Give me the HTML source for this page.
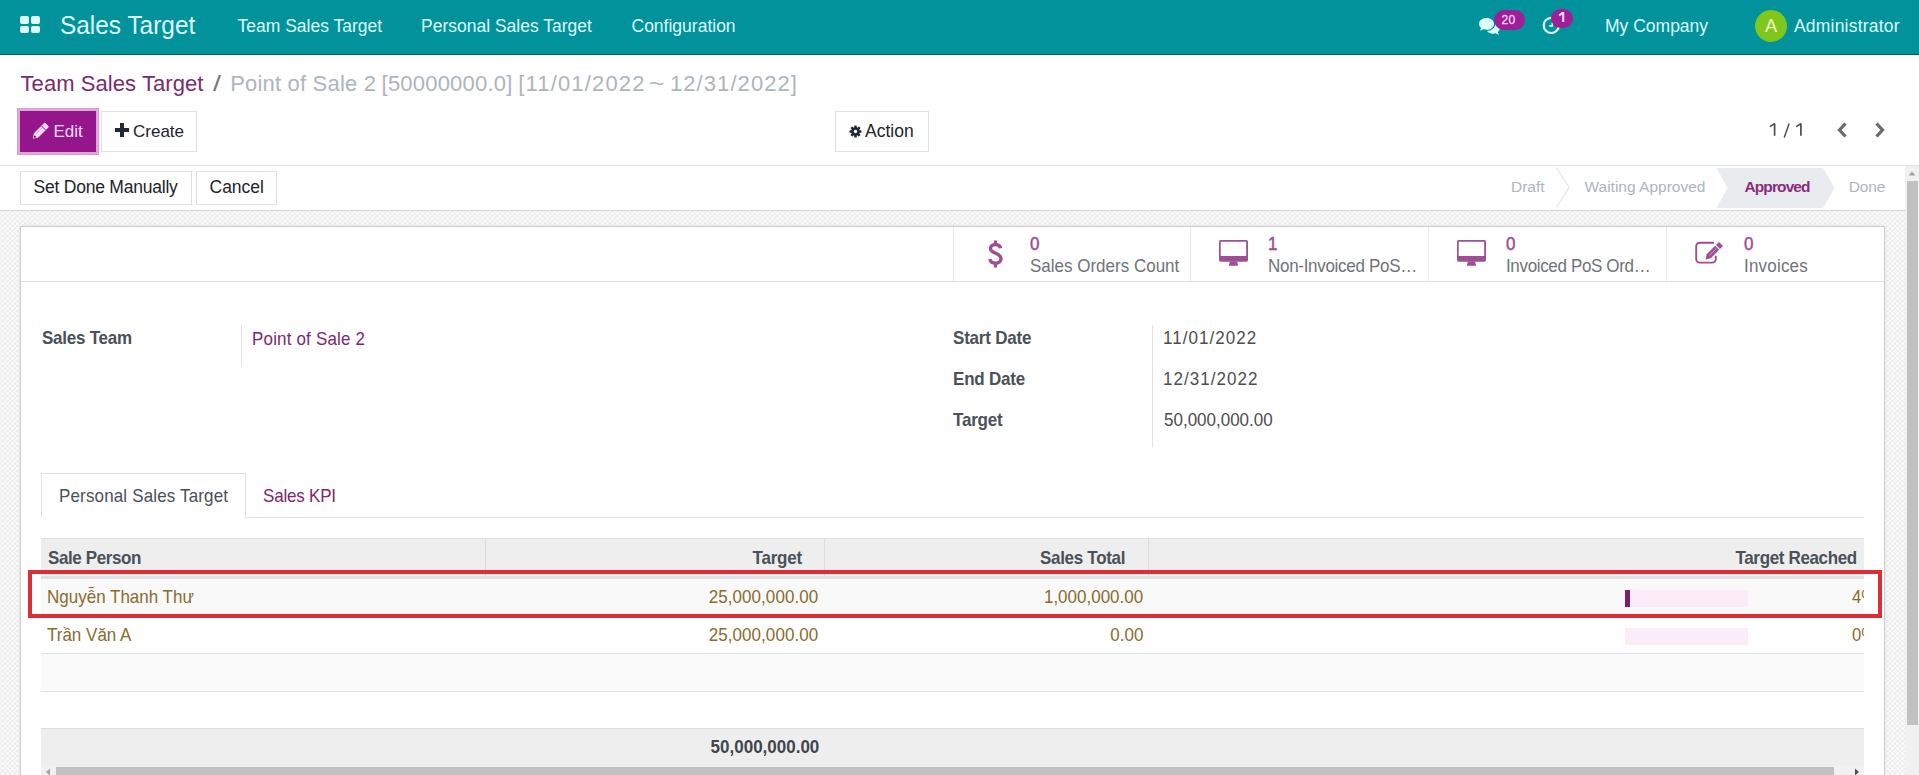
<!DOCTYPE html>
<html><head><meta charset="utf-8"><title>Sales Target</title>
<style>
html,body{margin:0;padding:0;}
body{width:1919px;height:775px;position:relative;overflow:hidden;background:#fff;font-family:"Liberation Sans",sans-serif;}
.r{position:absolute;}
.t{position:absolute;white-space:nowrap;line-height:1;}
.bgpat{background-color:#ebebeb;background-image:
 radial-gradient(circle at 50% 50%,#fbfbfb 0,#fbfbfb 0.9px,rgba(251,251,251,0) 2px),
 radial-gradient(circle at 50% 50%,#fbfbfb 0,#fbfbfb 0.9px,rgba(251,251,251,0) 2px);
 background-size:5px 5px;background-position:0 0,2.5px 2.5px;}
</style></head><body>
<div class="r" style="left:0px;top:0px;width:1919px;height:54px;background:#01929b;"></div>
<div class="r" style="left:0px;top:54px;width:1919px;height:1px;background:#0d5a60;"></div>
<div class="r" style="left:20px;top:16px;width:9.4px;height:8.4px;background:#dcfdfd;border-radius:2px;"></div>
<div class="r" style="left:30.8px;top:16px;width:9.4px;height:8.4px;background:#dcfdfd;border-radius:2px;"></div>
<div class="r" style="left:20px;top:25.8px;width:9.4px;height:7.4px;background:#dcfdfd;border-radius:2px;"></div>
<div class="r" style="left:30.8px;top:25.8px;width:9.4px;height:7.4px;background:#dcfdfd;border-radius:2px;"></div>
<div class="t" style="left:60px;top:11.58px;font-size:26.60px;color:#dcfdfd;transform:scaleX(0.918);transform-origin:0 0;">Sales Target</div>
<div class="t" style="left:237.5px;top:17.99px;font-size:17.50px;color:#dcfdfd;">Team Sales Target</div>
<div class="t" style="left:421px;top:17.99px;font-size:17.50px;color:#dcfdfd;">Personal Sales Target</div>
<div class="t" style="left:631.5px;top:17.99px;font-size:17.50px;color:#dcfdfd;">Configuration</div>
<div class="t" style="left:1605px;top:17.99px;font-size:17.50px;color:#dcfdfd;">My Company</div>
<div class="t" style="left:1794px;top:17.99px;font-size:17.50px;color:#dcfdfd;letter-spacing:0.200px;">Administrator</div>
<svg class="r" style="left:1478px;top:17px" width="24" height="20" viewBox="0 0 24 20">
<path fill="#dcfdfd" d="M8.5 1C4.2 1 1 3.6 1 6.8c0 1.7.9 3.2 2.3 4.3L1.8 13.8l3.6-1.5c1 .3 2 .5 3.1.5 4.2 0 7.5-2.6 7.5-5.9S12.7 1 8.5 1z"/>
<path fill="#dcfdfd" d="M17.2 7.2c0 3.9-3.9 6.6-8.2 6.8 1.2 1.6 3.4 2.7 5.9 2.7.9 0 1.8-.1 2.6-.4l3.6 1.6-1.4-2.8c1.3-1 2.1-2.4 2.1-3.9 0-1.6-1-3.1-2.5-4.1-.6 0-1.3 0-2.1.1z"/>
</svg>
<div class="r" style="left:1494px;top:10px;width:30.5px;height:19.5px;background:#9e1f98;border-radius:10px;"></div>
<div class="t" style="left:1501.5px;top:13.84px;font-size:12.00px;color:#fbdaf6;letter-spacing:0.400px;-webkit-text-stroke:0.3px #fbdaf6;">20</div>
<svg class="r" style="left:1542px;top:15px" width="20" height="20" viewBox="0 0 20 20">
<circle cx="9.3" cy="10.4" r="7.6" fill="none" stroke="#dcfdfd" stroke-width="2.2"/>
<path d="M10.3 7.4V10.9H7.3" fill="none" stroke="#dcfdfd" stroke-width="1.6"/>
</svg>
<div class="r" style="left:1551px;top:9px;width:22px;height:19px;background:#9e1f98;border-radius:10px;"></div>
<svg class="r" style="left:1551px;top:9px" width="22" height="19" viewBox="0 0 22 19"><path d="M8.2 6.4L11.3 4.1H12.2V12.9" fill="none" stroke="#fbdaf6" stroke-width="2.1" stroke-linejoin="miter"/></svg>
<div class="r" style="left:1755px;top:10px;width:32px;height:32px;background:#80c71c;border-radius:50%;"></div>
<div class="t" style="left:1771px;top:17.10px;font-size:18.19px;color:#f4f8c6;transform:scaleX(0.9346);transform-origin:0 0;transform:translateX(-50%);">A</div>
<div class="t" style="left:20.5px;top:72.98px;font-size:22.00px;color:#7a2b70;letter-spacing:0.070px;">Team Sales Target</div>
<div class="t" style="left:213px;top:72.98px;font-size:22.00px;color:#76787c;transform:scaleX(1.3);transform-origin:0 0;">/</div>
<div class="t" style="left:230.2px;top:72.98px;font-size:22.00px;color:#adb5bd;letter-spacing:0.190px;">Point of Sale 2</div>
<div class="t" style="left:381.6px;top:72.98px;font-size:22.00px;color:#adb5bd;letter-spacing:0.200px;">[50000000.0]</div>
<div class="t" style="left:518.2px;top:72.98px;font-size:22.00px;color:#adb5bd;letter-spacing:1.170px;">[11/01/2022</div>
<div class="t" style="left:649.2px;top:72.98px;font-size:22.00px;color:#adb5bd;transform:scaleX(1.2);transform-origin:0 0;">~</div>
<div class="t" style="left:670.0px;top:72.98px;font-size:22.00px;color:#adb5bd;letter-spacing:1.070px;">12/31/2022]</div>
<div class="r" style="left:17px;top:108px;width:82px;height:47px;background:#e3a4d9;box-shadow:inset 0 0 0 1px #cfa6ca;"></div>
<div class="r" style="left:20px;top:111px;width:76px;height:41px;background:#95168c;"></div>
<svg class="r" style="left:26px;top:116px" width="30" height="30" viewBox="0 0 30 30">
<g transform="translate(7.2 22.3) rotate(-45)">
<path d="M0 0L4.3-2.8H18.4a0.8 0.8 0 0 1 .8.8V2a0.8 0.8 0 0 1-.8.8H4.3z" fill="#fbdcf6" stroke="#fbdcf6" stroke-width="0.6" stroke-linejoin="round"/>
<path d="M14.6-2.9V2.9" stroke="#74106c" stroke-width="0.9"/>
<path d="M5.5-1.2H13" stroke="#b86ab2" stroke-width="0.6"/>
<circle cx="2.3" cy="0" r="1" fill="#3d0c3a"/>
</g></svg>
<div class="t" style="left:53.5px;top:122.61px;font-size:17.00px;color:#fbdcf6;">Edit</div>
<div class="r" style="left:101px;top:111px;width:96px;height:41px;border:1px solid #dee2e6;box-sizing:border-box;background:#fff;"></div>
<div class="r" style="left:114.5px;top:128px;width:14px;height:4px;background:#1f2a33;"></div>
<div class="r" style="left:119.5px;top:123px;width:4px;height:14px;background:#1f2a33;"></div>
<div class="t" style="left:133px;top:122.61px;font-size:17.00px;color:#212529;">Create</div>
<div class="r" style="left:835px;top:111px;width:94px;height:41px;border:1px solid #dee2e6;box-sizing:border-box;background:#fff;"></div>
<svg class="r" style="left:848.5px;top:124.5px" width="13" height="13" viewBox="0 0 14 14">
<g fill="#1f2a33"><circle cx="7" cy="7" r="4.6"/>
<rect x="5.6" y="0.6" width="2.8" height="12.8" rx="0.6"/>
<rect x="5.6" y="0.6" width="2.8" height="12.8" rx="0.6" transform="rotate(45 7 7)"/>
<rect x="5.6" y="0.6" width="2.8" height="12.8" rx="0.6" transform="rotate(90 7 7)"/>
<rect x="5.6" y="0.6" width="2.8" height="12.8" rx="0.6" transform="rotate(135 7 7)"/></g>
<circle cx="7" cy="7" r="1.8" fill="#fff"/>
</svg>
<div class="t" style="left:865px;top:122.59px;font-size:17.50px;color:#212529;">Action</div>
<svg class="r" style="left:1765px;top:118px" width="45" height="25" viewBox="0 0 45 25">
<path d="M4.9 8.6L9.6 5.6V17.8" fill="none" stroke="#4a4e53" stroke-width="1.7" stroke-linejoin="bevel"/>
<path d="M19.2 19.4L24.2 5.4" fill="none" stroke="#4a4e53" stroke-width="1.45"/>
<path d="M31.2 8.6L35.9 5.6V17.8" fill="none" stroke="#4a4e53" stroke-width="1.7" stroke-linejoin="bevel"/>
</svg>
<svg class="r" style="left:1836px;top:121px" width="52" height="18" viewBox="0 0 52 18">
<path d="M9.5 2.5L3.5 9l6 6.5" fill="none" stroke="#6b6b6b" stroke-width="3.3"/>
<path d="M40.5 2.5L46.5 9l-6 6.5" fill="none" stroke="#6b6b6b" stroke-width="3.3"/>
</svg>
<div class="r" style="left:0px;top:165px;width:1919px;height:1px;background:#dee2e6;"></div>
<div class="r" style="left:0px;top:166px;width:1905px;height:44px;background:#fff;"></div>
<div class="r" style="left:0px;top:210px;width:1905px;height:1px;background:#d3d3d3;"></div>
<div class="r" style="left:20px;top:171px;width:172px;height:34px;border:1px solid #dee2e6;box-sizing:border-box;"></div>
<div class="t" style="left:33.5px;top:178.99px;font-size:17.50px;color:#212529;letter-spacing:-0.220px;">Set Done Manually</div>
<div class="r" style="left:196px;top:171px;width:81px;height:34px;border:1px solid #dee2e6;box-sizing:border-box;"></div>
<div class="t" style="left:209.5px;top:178.99px;font-size:17.50px;color:#212529;">Cancel</div>
<div class="t" style="left:1511px;top:179.38px;font-size:15.50px;color:#adb5bd;">Draft</div>
<svg class="r" style="left:1555px;top:166px" width="18" height="44" viewBox="0 0 18 44">
<path d="M1.5 1.5L14 21.5 1.5 41.5" fill="none" stroke="#e3e6ea" stroke-width="1.2"/></svg>
<div class="t" style="left:1584.5px;top:179.38px;font-size:15.50px;color:#adb5bd;">Waiting Approved</div>
<svg class="r" style="left:1716px;top:168px" width="120" height="40" viewBox="0 0 120 40">
<path d="M0.5 0H107L118.5 20 107 40H0.5L11.5 20z" fill="#e9ecef"/></svg>
<div class="t" style="left:1744.5px;top:179.38px;font-size:15.50px;color:#8b2b80;font-weight:700;letter-spacing:-0.900px;">Approved</div>
<div class="t" style="left:1848.7px;top:179.38px;font-size:15.50px;color:#adb5bd;letter-spacing:-0.100px;">Done</div>
<div class="r bgpat" style="left:0;top:211px;width:1905px;height:564px;"></div>
<div class="r" style="left:1905px;top:166px;width:14px;height:609px;background:#f1f1f1;"></div>
<svg class="r" style="left:1905px;top:166px" width="14" height="14" viewBox="0 0 14 14"><path d="M3.5 9.5L7 5.5 10.5 9.5z" fill="#a3a3a3"/></svg>
<div class="r" style="left:1907px;top:181px;width:11px;height:544px;background:#c1c1c1;"></div>
<div class="r" style="left:20px;top:226px;width:1865px;height:549px;background:#fff;border:1px solid #cdcdcd;border-bottom:none;box-sizing:border-box;box-shadow:0 0 4px rgba(0,0,0,0.07);"></div>
<div class="r" style="left:21px;top:281px;width:1863px;height:1px;background:#dee2e6;"></div>
<div class="r" style="left:953px;top:227px;width:1px;height:54px;background:#e9ecef;"></div>
<div class="r" style="left:1190px;top:227px;width:1px;height:54px;background:#e9ecef;"></div>
<div class="r" style="left:1428px;top:227px;width:1px;height:54px;background:#e9ecef;"></div>
<div class="r" style="left:1666px;top:227px;width:1px;height:54px;background:#e9ecef;"></div>
<svg class="r" style="left:987px;top:239px" width="17" height="30" viewBox="0 0 17 30">
<path d="M13.6 9.2C13.2 7 11.2 5.6 8.5 5.6 5.6 5.6 3.5 7.2 3.5 9.6c0 5.6 10.5 3.6 10.5 10.2 0 2.6-2.3 4.4-5.5 4.4-3 0-5.2-1.6-5.6-4.1" fill="none" stroke="#9f4e96" stroke-width="3.4"/>
<rect x="6.9" y="1.5" width="3.2" height="5" fill="#9f4e96"/><rect x="6.9" y="23" width="3.2" height="5.5" fill="#9f4e96"/>
</svg>
<div class="t" style="left:1030px;top:233.98px;font-size:19.04px;color:#9a4c91;transform:scaleX(0.8929);transform-origin:0 0;-webkit-text-stroke:0.5px #9a4c91;">0</div>
<div class="t" style="left:1030px;top:256.60px;font-size:18.19px;color:#6f7378;transform:scaleX(0.9346);transform-origin:0 0;">Sales Orders Count</div>
<svg class="r" style="left:1210px;top:232px" width="50" height="40" viewBox="0 0 50 40">
<path fill="#9f4e96" fill-rule="evenodd" d="M10.8 8h25.4A1.8 1.8 0 0 1 38 9.8v18.1a1.8 1.8 0 0 1-1.8 1.8H10.8A1.8 1.8 0 0 1 9 27.9V9.8A1.8 1.8 0 0 1 10.8 8zM10.7 9.8V24h25.5V9.8z"/>
<path fill="#9f4e96" d="M19.9 29.5h7.2l1 4.3h-9.3z"/></svg>
<div class="t" style="left:1268px;top:233.98px;font-size:19.04px;color:#9a4c91;transform:scaleX(0.8929);transform-origin:0 0;-webkit-text-stroke:0.5px #9a4c91;">1</div>
<div class="t" style="left:1268px;top:256.60px;font-size:18.19px;color:#6f7378;letter-spacing:-0.321px;transform:scaleX(0.9346);transform-origin:0 0;">Non-Invoiced PoS…</div>
<svg class="r" style="left:1447.5px;top:232px" width="50" height="40" viewBox="0 0 50 40">
<path fill="#9f4e96" fill-rule="evenodd" d="M10.8 8h25.4A1.8 1.8 0 0 1 38 9.8v18.1a1.8 1.8 0 0 1-1.8 1.8H10.8A1.8 1.8 0 0 1 9 27.9V9.8A1.8 1.8 0 0 1 10.8 8zM10.7 9.8V24h25.5V9.8z"/>
<path fill="#9f4e96" d="M19.9 29.5h7.2l1 4.3h-9.3z"/></svg>
<div class="t" style="left:1505.5px;top:233.98px;font-size:19.04px;color:#9a4c91;transform:scaleX(0.8929);transform-origin:0 0;-webkit-text-stroke:0.5px #9a4c91;">0</div>
<div class="t" style="left:1505.5px;top:256.60px;font-size:18.19px;color:#6f7378;letter-spacing:-0.374px;transform:scaleX(0.9346);transform-origin:0 0;">Invoiced PoS Ord…</div>
<svg class="r" style="left:1685px;top:232px" width="50" height="40" viewBox="0 0 50 40">
<path d="M29 10.7H14.7a3.5 3.5 0 0 0-3.5 3.5v12.9a3.5 3.5 0 0 0 3.5 3.5h12.6a3.5 3.5 0 0 0 3.5-3.5v-3.4" fill="none" stroke="#9f4e96" stroke-width="1.9"/>
<path fill="#9f4e96" d="M20.5 27.5L25.66 26.3 34.15 17.81 30.19 13.85 21.7 22.34z"/>
<path fill="#9f4e96" d="M35 16.96L37.97 13.99 34.01 10.03 31.04 13z"/>
<path d="M24.6 23.2L31.4 16.4" stroke="#fff" stroke-width="0.8" opacity="0.6"/>
</svg>
<div class="t" style="left:1744px;top:233.98px;font-size:19.04px;color:#9a4c91;transform:scaleX(0.8929);transform-origin:0 0;-webkit-text-stroke:0.5px #9a4c91;">0</div>
<div class="t" style="left:1744px;top:256.60px;font-size:18.19px;color:#6f7378;letter-spacing:0.214px;transform:scaleX(0.9346);transform-origin:0 0;">Invoices</div>
<div class="t" style="left:41.5px;top:328.70px;font-size:18.19px;color:#4a5159;font-weight:700;letter-spacing:-0.268px;transform:scaleX(0.9346);transform-origin:0 0;">Sales Team</div>
<div class="r" style="left:241px;top:325px;width:1px;height:41px;background:#e3e3e3;"></div>
<div class="t" style="left:251.6px;top:329.90px;font-size:18.19px;color:#7b2871;letter-spacing:0.182px;transform:scaleX(0.9346);transform-origin:0 0;">Point of Sale 2</div>
<div class="t" style="left:952.5px;top:328.60px;font-size:18.19px;color:#4a5159;font-weight:700;letter-spacing:-0.214px;transform:scaleX(0.9346);transform-origin:0 0;">Start Date</div>
<div class="t" style="left:952.5px;top:369.90px;font-size:18.19px;color:#4a5159;font-weight:700;letter-spacing:-0.214px;transform:scaleX(0.9346);transform-origin:0 0;">End Date</div>
<div class="t" style="left:952.5px;top:410.80px;font-size:18.19px;color:#4a5159;font-weight:700;letter-spacing:-0.214px;transform:scaleX(0.9346);transform-origin:0 0;">Target</div>
<div class="r" style="left:1152px;top:325px;width:1px;height:122px;background:#e3e3e3;"></div>
<div class="t" style="left:1162.8px;top:329.10px;font-size:18.19px;color:#4d4d4d;letter-spacing:1.124px;transform:scaleX(0.9346);transform-origin:0 0;">11/01/2022</div>
<div class="t" style="left:1162.8px;top:370.10px;font-size:18.19px;color:#4d4d4d;letter-spacing:1.124px;transform:scaleX(0.9346);transform-origin:0 0;">12/31/2022</div>
<div class="t" style="left:1163.5px;top:411.10px;font-size:18.19px;color:#4d4d4d;transform:scaleX(0.9346);transform-origin:0 0;">50,000,000.00</div>
<div class="r" style="left:41px;top:517px;width:1823px;height:1px;background:#dee2e6;"></div>
<div class="r" style="left:41px;top:473px;width:205px;height:45px;background:#fff;border:1px solid #dee2e6;border-bottom-color:#fff;box-sizing:border-box;"></div>
<div class="t" style="left:59px;top:487.10px;font-size:18.19px;color:#4a5159;letter-spacing:0.161px;transform:scaleX(0.9346);transform-origin:0 0;">Personal Sales Target</div>
<div class="t" style="left:262.6px;top:487.10px;font-size:18.19px;color:#7b2871;letter-spacing:-0.214px;transform:scaleX(0.9346);transform-origin:0 0;">Sales KPI</div>
<div class="r" style="left:41px;top:538px;width:1823px;height:1px;background:#dee2e6;"></div>
<div class="r" style="left:41px;top:539px;width:1823px;height:37px;background:#eeeeee;"></div>
<div class="r" style="left:41px;top:576px;width:1823px;height:3px;background:#e0e1e3;"></div>
<div class="r" style="left:485px;top:539px;width:1px;height:37px;background:#dcdcdc;"></div>
<div class="r" style="left:824px;top:539px;width:1px;height:37px;background:#dcdcdc;"></div>
<div class="r" style="left:1148px;top:539px;width:1px;height:37px;background:#dcdcdc;"></div>
<div class="t" style="left:47.5px;top:548.60px;font-size:18.19px;color:#4a5159;font-weight:700;letter-spacing:-0.428px;transform:scaleX(0.9346);transform-origin:0 0;">Sale Person</div>
<div class="t" style="right:1117px;top:548.60px;font-size:18.19px;color:#4a5159;font-weight:700;letter-spacing:-0.214px;transform:scaleX(0.9346);transform-origin:100% 0;">Target</div>
<div class="t" style="right:793.5px;top:548.60px;font-size:18.19px;color:#4a5159;font-weight:700;letter-spacing:-0.321px;transform:scaleX(0.9346);transform-origin:100% 0;">Sales Total</div>
<div class="t" style="right:62px;top:548.60px;font-size:18.19px;color:#4a5159;font-weight:700;letter-spacing:-0.374px;transform:scaleX(0.9346);transform-origin:100% 0;">Target Reached</div>
<div class="r" style="left:41px;top:579px;width:1823px;height:36px;background:#f9f9f9;"></div>
<div class="r" style="left:41px;top:615px;width:1823px;height:1px;background:#e9ecef;"></div>
<div class="t" style="left:46.5px;top:588.40px;font-size:18.19px;color:#8a6c2d;transform:scaleX(0.9346);transform-origin:0 0;">Nguyễn Thanh Thư</div>
<div class="t" style="right:1100.5px;top:588.40px;font-size:18.19px;color:#8a6c2d;letter-spacing:0.075px;transform:scaleX(0.9346);transform-origin:100% 0;">25,000,000.00</div>
<div class="t" style="right:776px;top:588.10px;font-size:18.19px;color:#8a6c2d;transform:scaleX(0.9346);transform-origin:100% 0;">1,000,000.00</div>
<div class="r" style="left:1625px;top:590px;width:123px;height:17px;background:#fcecf7;"></div>
<div class="r" style="left:1625px;top:590px;width:5px;height:17px;background:#7a1f74;"></div>
<div class="r" style="left:1849px;top:580px;width:15px;height:34px;overflow:hidden;"><div class="t" style="left:2.6px;top:9.0px;font-size:17.5px;color:#8a6c2d;transform:scaleX(0.95);transform-origin:0 0;">4%</div></div>
<div class="r" style="left:41px;top:616px;width:1823px;height:37px;background:#fff;"></div>
<div class="r" style="left:41px;top:653px;width:1823px;height:1px;background:#dee2e6;"></div>
<div class="t" style="left:46.5px;top:626.40px;font-size:18.19px;color:#8a6c2d;transform:scaleX(0.9346);transform-origin:0 0;">Trần Văn A</div>
<div class="t" style="right:1100.5px;top:626.40px;font-size:18.19px;color:#8a6c2d;letter-spacing:0.075px;transform:scaleX(0.9346);transform-origin:100% 0;">25,000,000.00</div>
<div class="t" style="right:776px;top:626.10px;font-size:18.19px;color:#8a6c2d;transform:scaleX(0.9346);transform-origin:100% 0;">0.00</div>
<div class="r" style="left:1625px;top:628px;width:123px;height:17px;background:#fcecf7;"></div>
<div class="r" style="left:1849px;top:618px;width:15px;height:34px;overflow:hidden;"><div class="t" style="left:2.6px;top:9.0px;font-size:17.5px;color:#8a6c2d;transform:scaleX(0.95);transform-origin:0 0;">0%</div></div>
<div class="r" style="left:41px;top:654px;width:1823px;height:37px;background:#fafafa;"></div>
<div class="r" style="left:41px;top:691px;width:1823px;height:1px;background:#dee2e6;"></div>
<div class="r" style="left:41px;top:728px;width:1823px;height:1px;background:#dddddd;"></div>
<div class="r" style="left:41px;top:729px;width:1823px;height:46px;background:#eeeeee;"></div>
<div class="t" style="right:1100px;top:737.50px;font-size:18.19px;color:#3f464d;font-weight:700;transform:scaleX(0.9346);transform-origin:100% 0;">50,000,000.00</div>
<div class="r" style="left:41px;top:766px;width:1823px;height:9px;background:#f1f1f1;"></div>
<div class="r" style="left:56px;top:767px;width:1778px;height:8px;background:#c1c1c1;"></div>
<svg class="r" style="left:43px;top:766px" width="10" height="9" viewBox="0 0 10 9"><path d="M7 2.5L3 6 7 9.5z" fill="#a3a3a3"/></svg>
<svg class="r" style="left:1852px;top:766px" width="10" height="9" viewBox="0 0 10 9"><path d="M3 2.5L7 6 3 9.5z" fill="#505050"/></svg>
<div class="r" style="left:28px;top:570px;width:1854px;height:48px;border:4px solid #dc2e34;box-sizing:border-box;"></div>
</body></html>
